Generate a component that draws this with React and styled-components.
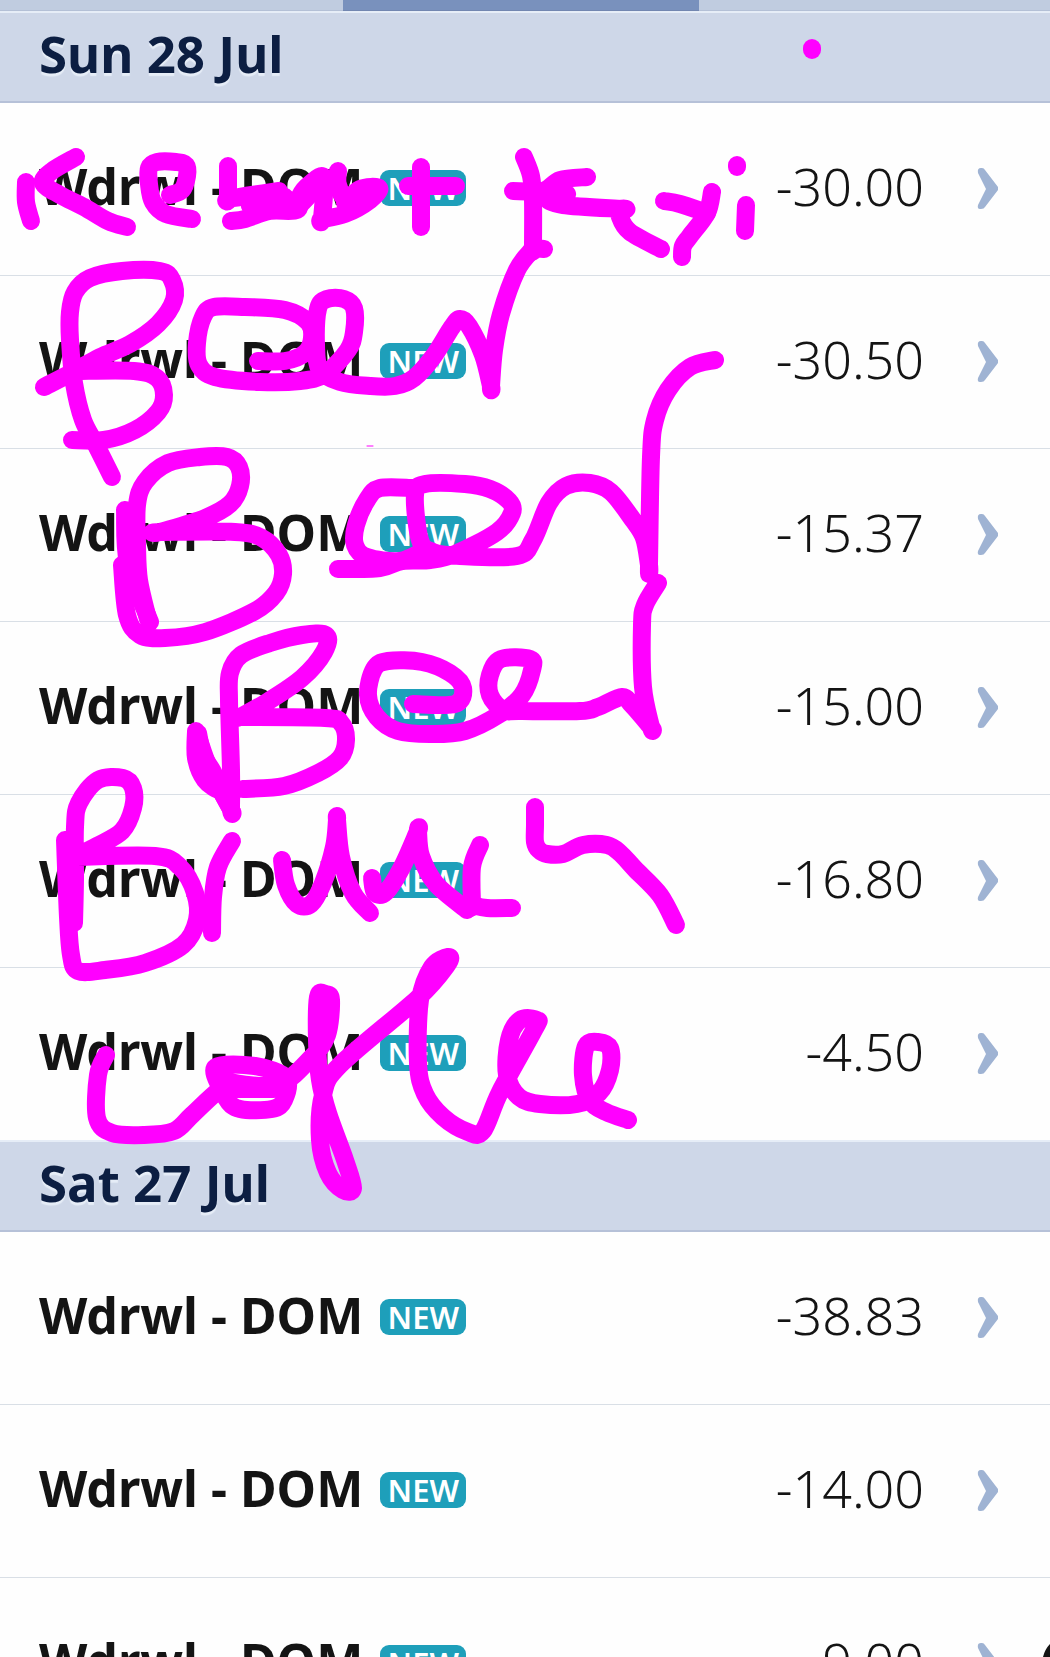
import React from 'react';
import styled, { createGlobalStyle } from 'styled-components';

const GlobalStyle = createGlobalStyle`
  body {
    margin: 0;
    background: #fefefe;
    font-family: 'Noto Sans', 'Open Sans', sans-serif;
  }
`;

// Statement screen, clipped to the window like a phone view
const Screen = styled.main`
  position: relative;
  height: 100vh;
  overflow: hidden;
  background: #fefefe;
`;

// Bottom edge of the tab strip
const TabStrip = styled.nav`
  display: grid;
  grid-template-columns: 343fr 356fr 351fr;
  height: 11px;
  background: #c0cce0;
`;

const Tab = styled.button`
  border: 0;
  border-bottom: 1px solid ${(props) => (props.$active ? '#7286b0' : '#b4c0d6')};
  padding: 0;
  background: ${(props) => (props.$active ? '#7991bd' : '#c0cce0')};
`;

const DayHeader = styled.h2`
  box-sizing: border-box;
  height: 92px;
  margin: 0;
  padding: 0 39px 8px;
  display: flex;
  align-items: center;
  border-top: 2px solid #e6edf7;
  border-bottom: 2px solid #b6c1d8;
  background: #ced7e8;
  color: #0c1e42;
  font-size: 51px;
  line-height: 68px;
  font-weight: 700;
  text-shadow: 0 3px 1px #e6edf7;
`;

const List = styled.ul`
  margin: 0;
  padding: 0;
  list-style: none;
`;

const Item = styled.li`
  & + & {
    border-top: 1px solid #d9dfe6;
  }
`;

const Row = styled.a`
  box-sizing: border-box;
  height: 172px;
  padding: 0 52px 2px 39px;
  display: flex;
  align-items: center;
  color: #141414;
  text-decoration: none;
`;

const Payee = styled.span`
  padding-bottom: 4px;
  font-size: 50px;
  line-height: 68px;
  font-weight: 700;
`;

const Badge = styled.span`
  width: 86px;
  height: 36px;
  margin-left: 17px;
  border-radius: 9px;
  background: #1e9fba;
  color: #fff;
  font-size: 31px;
  line-height: 36px;
  font-weight: 600;
  text-align: center;
`;

const Amount = styled.span`
  margin-left: auto;
  margin-right: 53px;
  padding-bottom: 4px;
  font-size: 52px;
  line-height: 68px;
  font-weight: 350;
`;

const Chevron = styled.svg`
  width: 21px;
  height: 41px;
  fill: #9fb3d3;
`;

// Handwritten notes lie over the whole list
const Ink = styled.svg`
  position: absolute;
  top: 0;
  left: 0;
  width: 100%;
  pointer-events: none;
  fill: none;
  stroke: #ff00ff;
  stroke-width: 18;
  stroke-linecap: round;
  stroke-linejoin: round;
`;

const Speck = styled.path`
  stroke-width: 1;
`;

const CornerMark = styled.path`
  fill: #141414;
  stroke: none;
`;

const days = [
  { title: 'Sun 28 Jul', amounts: ['-30.00', '-30.50', '-15.37', '-15.00', '-16.80', '-4.50'] },
  { title: 'Sat 27 Jul', amounts: ['-38.83', '-14.00', '-9.00'] },
];

// Pen strokes as x,y points. A point given twice makes a sharp turn.
const strokes = [
  // Kebab + Kyi
  '26,182 26,202 31,221',
  '76,157 52,171 43,183 60,195 84,207 108,221 127,227',
  '170,195 182,190 187,176 186,165 176,162 157,162 149,168 149,184 153,202 166,214 192,219',
  '228,166 228,199 228,199 252,195 279,191',
  '231,221 245,219 270,211 297,210 300,196 310,184 324,178 322,219 322,219 345,214 370,200 379,188 360,189 345,203',
  '338,171 338,185 348,200 375,192',
  '297,208 318,186',
  '250,206 285,197',
  '421,167 421,200 421,227',
  '408,186 456,186',
  '524,157 531,176 533,200 533,248 533,248 544,249',
  '513,191 543,191 560,180 587,177',
  '545,194 567,194 547,198 563,205 622,209 622,209 620,217 630,232 661,249',
  '664,201 680,204 707,213',
  '712,192 707,213 690,236 683,246 682,257',
  '746,205 745,231',
  '737,165 737,167',
  '812,48 812,50',
  // Beer
  '112,477 96,445 83,420 74,383 70,340 70,312 75,292 90,278 122,271 160,271 172,280 174,300 158,324 130,344 100,357 75,371 44,387',
  '77,371 134,371 157,378 164,395 158,412 135,430 104,440 72,440',
  '258,361 285,361 305,353 312,338 308,322 285,310 245,307 214,307 203,317 197,343 199,365 215,377 260,382 300,381 325,374 348,350 354,332 354,308 344,299 327,299 318,309 316,345 320,370 340,382 370,386 395,386 414,378 433,357 452,327 460,319 469,326 483,355 491,386 491,386 494,350 501,314 517,270 532,250',
  // Beer
  '125,510 128,563 150,622',
  '148,619 139,580 137,545 137,505 145,482 168,463 200,457 227,457 239,467 240,486 230,504 205,518 160,532 160,532 235,532 262,538 279,555 283,574 276,593 255,611 205,632 165,638 140,635 127,615 122,565',
  '338,569 380,568 402,561 430,560 455,554 497,532 512,513 509,501 490,489 465,484 425,484 415,495 420,540 433,552 460,556 517,556 533,540 549,503 566,486 590,483 611,492 633,520 644,538 649,565 649,565 651,457 655,420 668,390 690,367 715,360',
  '413,488 380,488 367,500 356,525 355,545 367,557 400,561 425,551 430,556',
  // Beer
  '196,731 196,758 205,780 220,790 213,772 203,755 198,733',
  '199,740 210,770 231,809 231,809 231,770 229,700 230,673 241,655 270,643 302,635 326,635 324,652 302,678 267,702 240,717 240,717 325,718 341,723 346,740 340,758 318,773 284,786 243,789',
  '231,809 218,785',
  '413,704 455,704 463,688 450,673 422,662 388,661 374,669 368,695 377,717 398,731 430,734 465,731 500,714 522,695 532,670 530,659 501,659 490,675 490,695 503,710 520,711 580,711 598,707 622,697 632,705 651,727 651,727 643,687 642,625 645,605 658,583',
  // Brunch
  '74,923 75,880 75,827 79,803 98,780 123,778 133,788 133,808 122,831 97,846 75,857 75,857 155,856 180,867 195,893 197,920 183,945 145,963 105,970 78,971 71,955 68,917 65,840',
  '70,860 72,915',
  '232,841 218,867 213,897 212,933',
  '282,860 286,885 297,904 311,904 323,883 334,847 337,820 337,820 341,857 353,893 370,913',
  '372,878 375,893 386,892 402,867 418,831 418,831 421,856 436,884 467,910',
  '480,845 472,867 472,905 472,905 487,908 512,908',
  '535,807 535,825 535,842 539,850 547,854 563,854 583,845 607,845 620,853 635,869 660,895 676,925',
  // Coffee
  '106,1055 98,1075 97,1118 112,1133 144,1135 174,1131 192,1115 221,1089 237,1089 274,1089',
  '221,1089 216,1067 255,1066 286,1078 284,1100 272,1109 240,1109 226,1098 219,1073',
  '221,1078 240,1084 280,1084 311,1058 327,1035 331,1000 325,994 318,997 317,1040 320,1080 328,1113 345,1160 353,1188 343,1190 328,1173 320,1140 323,1095 340,1065 418,998 447,965 448,957 432,967 420,1000 418,1063 425,1094 443,1117 468,1132 483,1131 500,1092 534,1030 537,1020 520,1020 509,1040 507,1075 519,1097 540,1104 577,1104 599,1093 610,1070 610,1048 598,1042 586,1046 583,1075 590,1101 606,1112 628,1120',
  '322,1000 321,1045',
];

// Catmull-Rom spline through the points, written as cubic curves
const toPath = (stroke) => {
  const pts = stroke.split(' ').map((p) => p.split(',').map(Number));
  let d = `M${pts[0]}`;
  for (let i = 0; i < pts.length - 1; i++) {
    const a = pts[i - 1] || pts[i];
    const b = pts[i];
    const c = pts[i + 1];
    const e = pts[i + 2] || c;
    d += `C${b[0] + (c[0] - a[0]) / 6},${b[1] + (c[1] - a[1]) / 6} ${c[0] - (e[0] - b[0]) / 6},${c[1] - (e[1] - b[1]) / 6} ${c}`;
  }
  return d;
};

const Transaction = ({ amount }) => (
  <Item>
    <Row href="#transaction">
      <Payee>Wdrwl - DOM</Payee>
      <Badge>NEW</Badge>
      <Amount>{amount}</Amount>
      <Chevron viewBox="0 0 21 41" aria-hidden="true">
        <path d="M1 5Q0 0 4 0H5Q7 0 8 2L21 19V22L8 39Q7 41 4 41H3Q0 41 1 37L9 21Z" />
      </Chevron>
    </Row>
  </Item>
);

const App = () => (
  <>
    <GlobalStyle />
    <Screen>
      <TabStrip>
        <Tab aria-label="Previous" />
        <Tab aria-label="Current" $active />
        <Tab aria-label="Next" />
      </TabStrip>

      {days.map((day) => (
        <section key={day.title}>
          <DayHeader>{day.title}</DayHeader>
          <List>
            {day.amounts.map((amount, index) => (
              <Transaction key={index} amount={amount} />
            ))}
          </List>
        </section>
      ))}

      {/* Handwriting */}
      <Ink viewBox="0 0 1050 1657" aria-hidden="true">
        {strokes.map((stroke, index) => (
          <path key={index} d={toPath(stroke)} />
        ))}
        <Speck d="M367 446H373" />
        <CornerMark d="M1050 1644Q1045 1649 1043 1657H1050Z" />
      </Ink>
    </Screen>
  </>
);

export default App;
